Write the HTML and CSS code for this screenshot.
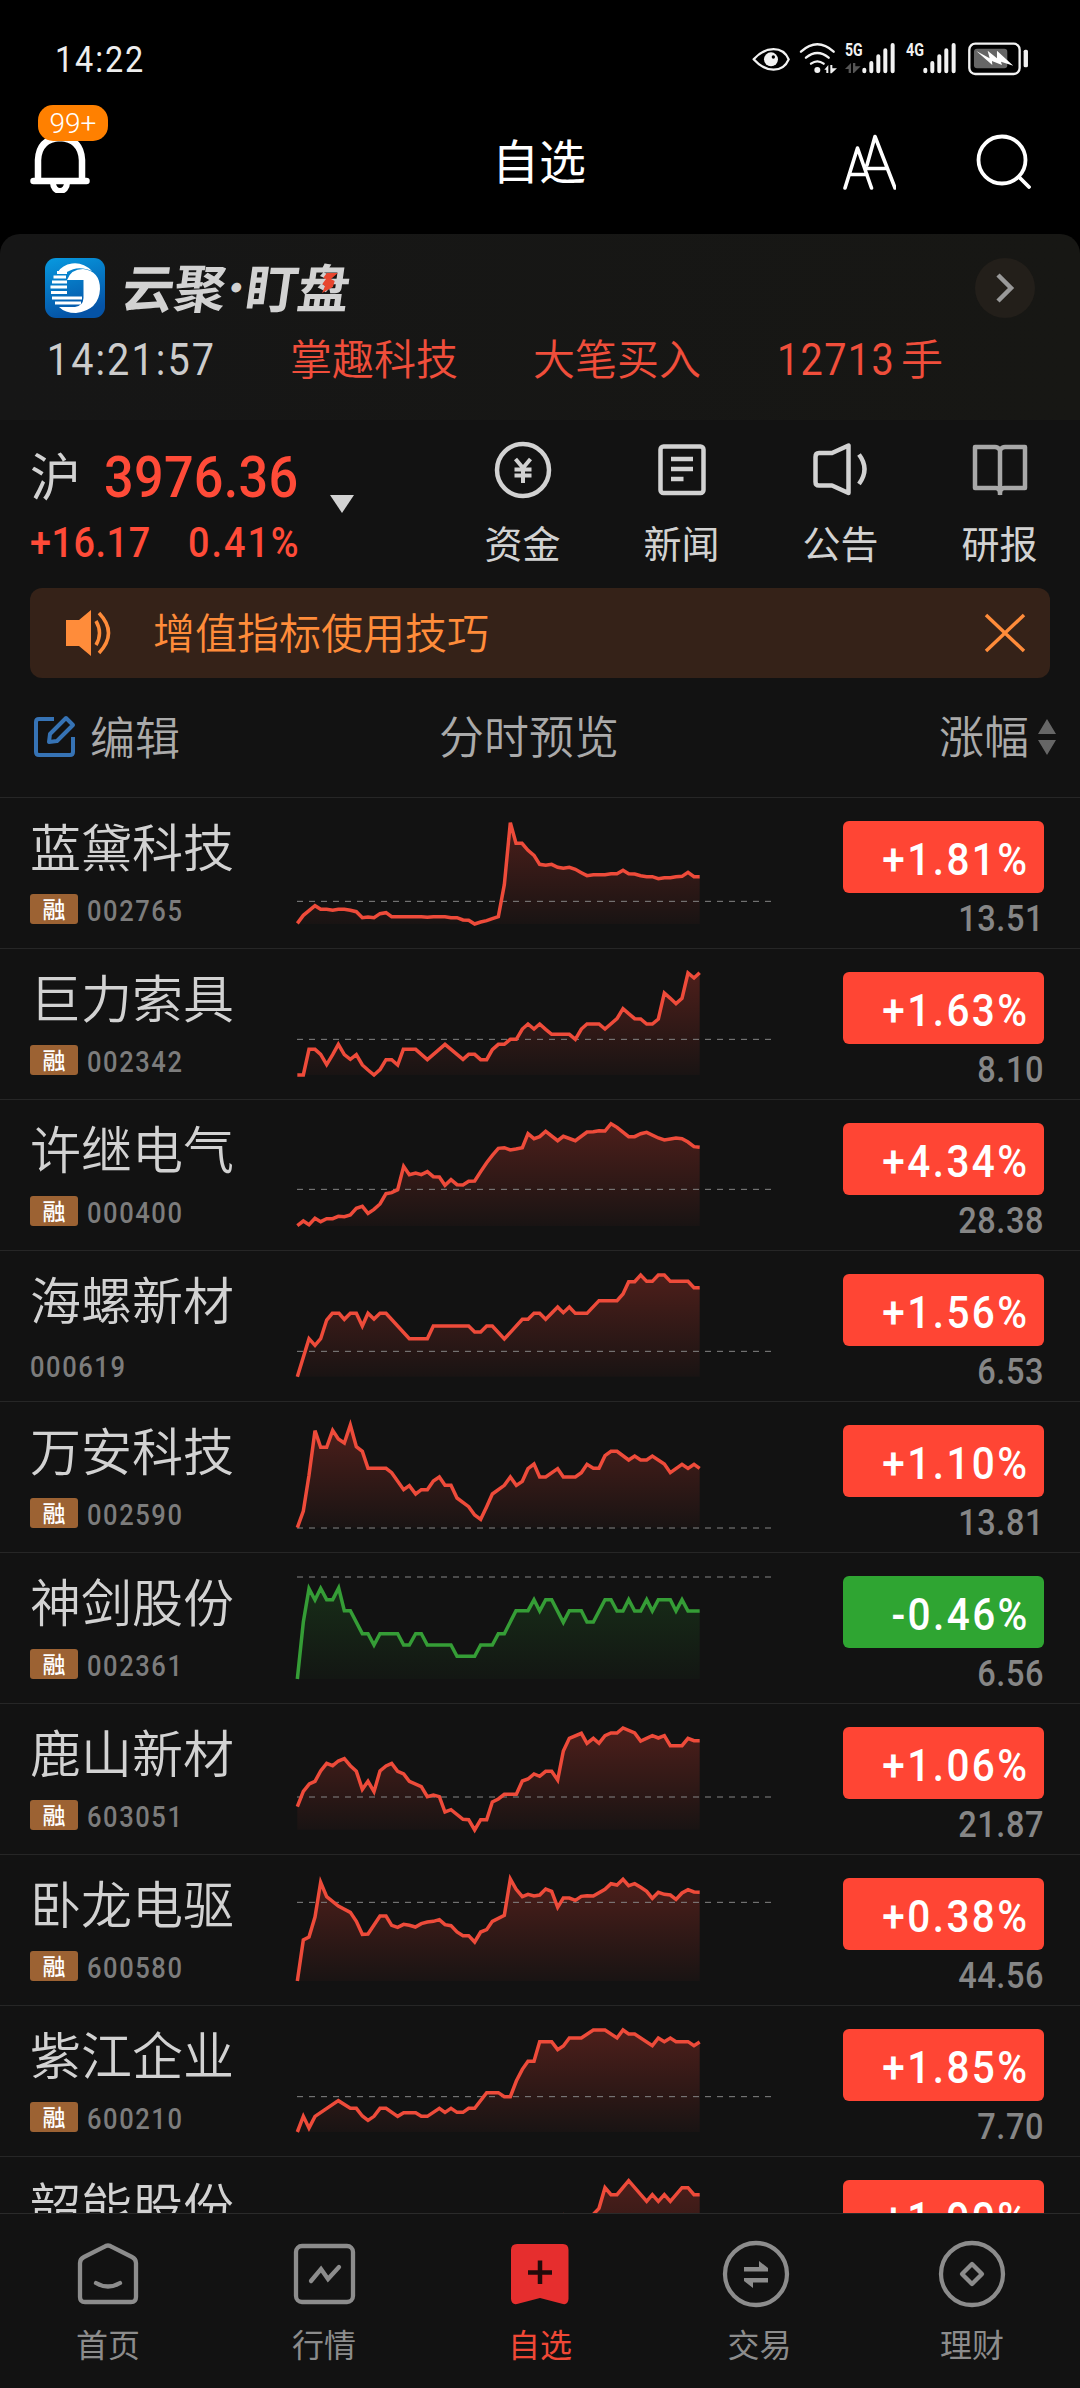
FILE: index.html
```html
<!DOCTYPE html>
<html lang="zh-CN">
<head>
<meta charset="utf-8">
<title>自选</title>
<link rel="stylesheet" href="styles.css">
</head>
<body>
<div class="app">
  <header class="status">
    <span class="clock num">14:22</span>
    <svg class="status-icons" viewBox="0 0 850 120">
      <g fill="none" stroke="#f2f2f2" stroke-width="7" stroke-linecap="round">
        <path d="M19 61C55 20 107 20 124 61C107 102 55 102 19 61Z" transform="translate(1 0)" stroke-linejoin="round"/>
        <path d="M162 38Q211 -6 260 38M177 56Q211 28 245 56M192 74Q211 60 230 74"/>
      </g>
      <circle cx="72" cy="61" r="21" fill="#f2f2f2"/><circle cx="79" cy="54" r="5" fill="#000"/>
      <circle cx="211" cy="93" r="9" fill="#f2f2f2"/>
      <path d="M232 92l12-14v24h-6v-10zM250 78h6v10h14l-16 15h-4z" fill="#f2f2f2"/>
      <path d="M294 90l18-18v30h-7v-12zM318 72h7v10h16l-20 20h-3z" fill="#555"/>
      <g class="net" fill="#f2f2f2"><text x="294" y="52" textLength="53" lengthAdjust="spacingAndGlyphs">5G</text><text x="477" y="52" textLength="54" lengthAdjust="spacingAndGlyphs">4G</text></g>
      <g stroke="#f2f2f2" stroke-width="12" stroke-linecap="round">
        <path d="M352 92v5M373 72v25M394 52v45M415 34v63M437 18v79M535 92v5M556 72v25M577 52v45M598 34v63M620 18v79"/>
      </g>
      <rect x="667" y="14" width="151" height="91" rx="18" fill="none" stroke="#f2f2f2" stroke-width="7"/>
      <rect x="681" y="29" width="100" height="59" rx="9" fill="#666"/>
      <path d="M688 36L728 58 722 35 750 58 750 35 799 80 762 68 765 78 735 66 736 78Z" fill="#fff"/>
      <rect x="830" y="32" width="13" height="53" rx="5" fill="#f2f2f2"/>
    </svg>
  </header>

  <div class="titlebar">
    <div class="bell">
      <svg viewBox="0 0 60 60" width="60" height="60"><path d="M8 48V27Q9 6 30 5Q51 6 52 27V48M3.500 48H56.500" fill="none" stroke="#fff" stroke-width="6.500" stroke-linecap="round"/><path d="M23 50a7 8 0 0 0 14 0" fill="none" stroke="#fff" stroke-width="6"/></svg>
      <span class="count">99+</span>
    </div>
    <h1>自选</h1>
    <svg class="font-size" viewBox="0 0 54 56" width="54" height="56"><g fill="none" stroke="#fff" stroke-width="3.600" stroke-linecap="round" stroke-linejoin="round"><path d="M3 54L15.500 14 29.500 54M8 40.500H25M25 31L33 2.500 53 54M24.500 34.500H45"/></g></svg>
    <svg class="search" viewBox="0 0 56 56" width="56" height="56"><g fill="none" stroke="#fff" stroke-width="3.800" stroke-linecap="round"><circle cx="27" cy="27" r="23.500"/><path d="M44 44L54 54"/></g></svg>
  </div>

  <section class="watch-card">
    <div class="brand">
      <svg class="logo" viewBox="0 0 60 60" width="60" height="60">
        <defs><linearGradient id="lg" x1="0" y1="0" x2="0.300" y2="1"><stop offset="0" stop-color="#079ae0"/><stop offset="1" stop-color="#0553a6"/></linearGradient></defs>
        <rect width="60" height="60" rx="11" fill="url(#lg)"/>
        <path d="M47 13Q38 4 27 5.500Q17 7 13 14H22Q30 9 38 10.500Q43 11 47 13Z" fill="#fff"/>
        <path d="M22 22Q26 11 38 11Q55 13 55 31Q54 52 31 55Q20 55 14 49H30Q38 48 38.500 40V22Z" fill="#fff"/>
        <path d="M12 14.500H22M8.500 19H21M7 24H22M5.500 29H22M6 34.500H22M7 40H37M10 45H36" stroke="#fff" stroke-width="2.800"/>
      </svg>
      <h2>云聚<i>·</i>盯<span class="pan">盘<svg viewBox="0 0 14 20" width="14" height="20"><path d="M3 0H14L8 6 12 8 11 14 1 20 3 13 0 11 3 6 0 5Z" fill="#e8462f"/></svg></span></h2>
      <span class="more"><svg viewBox="0 0 20 32" width="20" height="32"><path d="M3 3L16 16 3 29" fill="none" stroke="#999" stroke-width="4.500"/></svg></span>
    </div>
    <div class="tick">
      <span class="tick-time num">14:21:57</span>
      <span class="tick-name">掌趣科技</span>
      <span class="tick-kind">大笔买入</span>
      <span class="tick-vol"><b class="num">12713</b>手</span>
    </div>
  </section>

  <section class="market">
    <div class="index">
      <div class="index-top"><span class="index-name">沪</span><span class="index-value num">3976.36</span><i class="caret"></i></div>
      <div class="index-change"><span class="num chg">+16.17</span><span class="num pct-chg">0.41%</span></div>
    </div>
    <nav class="shortcuts">
      <a><svg viewBox="0 0 60 60"><circle cx="30" cy="30" r="26"/><path d="M22.500 19L30 28 37.500 19M30 28V43M21.500 29.500H38.500M21.500 35.500H38.500" stroke-width="4"/></svg>资金</a>
      <a><svg viewBox="0 0 60 60"><rect x="8.500" y="6.500" width="43" height="46.500" rx="3"/><path d="M19 19H41M19 29H41M19 39H31.500"/></svg>新闻</a>
      <a><svg viewBox="0 0 60 60"><path d="M8 13H21L37.500 5.500V53L21 45.500H8Q4.500 45.500 4.500 42V17Q4.500 13 8 13ZM48 14.500Q59 29 48 44" stroke-linejoin="round"/></svg>公告</a>
      <a class="dim"><svg viewBox="0 0 60 60"><path d="M30 10Q28 7 25 7H5V48H26Q30 48 30 53Q30 48 34 48H55V7H35Q32 7 30 10ZM30 10V55" stroke-linejoin="round"/></svg>研报</a>
    </nav>
  </section>

  <aside class="notice">
    <svg viewBox="0 0 48 48" width="48" height="48"><path d="M1 11H14L26 1V47L14 37H1Z" fill="#ff8c3a"/><path d="M31 12Q38 24 31 36M34 4Q53 24 34 44" fill="none" stroke="#ff8c3a" stroke-width="3.500"/></svg>
    <p>增值指标使用技巧</p>
    <svg class="close" viewBox="0 0 42 40" width="42" height="40"><path d="M2 2L40 38M40 2L2 38" stroke="#ff8c3a" stroke-width="3.500"/></svg>
  </aside>

  <div class="columns">
    <span class="edit"><svg viewBox="0 0 44 44" width="44" height="44"><g fill="none" stroke="#3673b5" stroke-width="4" stroke-linejoin="round"><path d="M21 5H6Q3 5 3 8V38Q3 41 6 41H37Q40 41 40 38V23"/><path d="M33 4L40 11 24 27 16 28 17 20Z"/></g></svg>编辑</span>
    <span class="preview">分时预览</span>
    <span class="sort">涨幅<svg viewBox="0 0 18 36" width="18" height="36"><path d="M9 0L18 15H0ZM9 36L18 21H0Z" fill="#666"/></svg></span>
  </div>

  <main class="list">
    <article class="row"><div class="stock"><h3>蓝黛科技</h3><p><em>融</em><span class="num">002765</span></p></div><svg class="chart" viewBox="0 0 1560 450"></svg><div class="quote"><strong><b class="num">+1.81%</b></strong><span class="num">13.51</span></div></article>
    <article class="row"><div class="stock"><h3>巨力索具</h3><p><em>融</em><span class="num">002342</span></p></div><svg class="chart" viewBox="0 0 1560 450"></svg><div class="quote"><strong><b class="num">+1.63%</b></strong><span class="num">8.10</span></div></article>
    <article class="row"><div class="stock"><h3>许继电气</h3><p><em>融</em><span class="num">000400</span></p></div><svg class="chart" viewBox="0 0 1560 450"></svg><div class="quote"><strong><b class="num">+4.34%</b></strong><span class="num">28.38</span></div></article>
    <article class="row"><div class="stock"><h3>海螺新材</h3><p class="plain"><span class="num">000619</span></p></div><svg class="chart" viewBox="0 0 1560 450"></svg><div class="quote"><strong><b class="num">+1.56%</b></strong><span class="num">6.53</span></div></article>
    <article class="row"><div class="stock"><h3>万安科技</h3><p><em>融</em><span class="num">002590</span></p></div><svg class="chart" viewBox="0 0 1560 450"></svg><div class="quote"><strong><b class="num">+1.10%</b></strong><span class="num">13.81</span></div></article>
    <article class="row down"><div class="stock"><h3>神剑股份</h3><p><em>融</em><span class="num">002361</span></p></div><svg class="chart" viewBox="0 0 1560 450"></svg><div class="quote"><strong><b class="num">-0.46%</b></strong><span class="num">6.56</span></div></article>
    <article class="row"><div class="stock"><h3>鹿山新材</h3><p><em>融</em><span class="num">603051</span></p></div><svg class="chart" viewBox="0 0 1560 450"></svg><div class="quote"><strong><b class="num">+1.06%</b></strong><span class="num">21.87</span></div></article>
    <article class="row"><div class="stock"><h3>卧龙电驱</h3><p><em>融</em><span class="num">600580</span></p></div><svg class="chart" viewBox="0 0 1560 450"></svg><div class="quote"><strong><b class="num">+0.38%</b></strong><span class="num">44.56</span></div></article>
    <article class="row"><div class="stock"><h3>紫江企业</h3><p><em>融</em><span class="num">600210</span></p></div><svg class="chart" viewBox="0 0 1560 450"></svg><div class="quote"><strong><b class="num">+1.85%</b></strong><span class="num">7.70</span></div></article>
    <article class="row"><div class="stock"><h3>韶能股份</h3></div><svg class="chart" viewBox="0 0 1560 450"></svg><div class="quote"><strong><b class="num">+1.90%</b></strong></div></article>
  </main>

  <nav class="tabs">
    <a><svg viewBox="0 0 68 68"><path d="M34 5.500Q36 5.500 38 7L58 17Q62 19 62 23V57Q62 62 57 62H11Q6 62 6 57V23Q6 19 10 17L30 7Q32 5.500 34 5.500Z"/><path d="M22 43Q34 50 46 43" stroke-linecap="round"/></svg>首页</a>
    <a><svg viewBox="0 0 68 68"><rect x="6" y="6" width="57" height="56" rx="6"/><path d="M21 41L31 29 38 39 49 27" stroke-linecap="round"/></svg>行情</a>
    <a class="active"><svg viewBox="0 0 68 68"><path d="M11 4H57Q62.500 4 62.500 10V59Q62 65 57 64L34 58 11 64Q5.500 65 5 59V10Q5 4 11 4Z" class="flag"/><path d="M34 20.500V44M22 32.500H46" class="plus"/></svg>自选</a>
    <a class="trade"><svg viewBox="0 0 68 68"><circle cx="34" cy="34" r="31"/><path class="arrows" d="M22 27H37V21L46 28V31.500H22ZM46 42.500H31V48L22 41V38H46Z"/></svg><span>交易</span></a>
    <a><svg viewBox="0 0 68 68"><circle cx="34" cy="34" r="31"/><path d="M34 24L44 34 34 44 24 34Z" stroke-linejoin="round"/></svg>理财</a>
  </nav>
</div>
<script src="charts.js"></script>
</body>
</html>
```
FILE: styles.css
```css
* { box-sizing: border-box; margin: 0; padding: 0; }
body { background: #000; font-family: "Noto Sans CJK SC", sans-serif; color: #d2d2d2; }
h1, h2, h3 { font-weight: 400; }
i, em { font-style: normal; }
svg { display: block; flex: none; }
/* Narrow figures: Roboto squeezed horizontally, anchored on the left unless right-aligned. */
.num { font-family: Roboto, "Liberation Sans", sans-serif; display: inline-block; transform: scaleX(0.9); transform-origin: 0 50%; }
.app { width: 1080px; height: 2388px; overflow: hidden; display: flex; flex-direction: column; background: #000; }

.status { height: 100px; padding: 18px 50px 0 55px; display: flex; justify-content: space-between; align-items: center; flex: none; }
.clock { font-size: 36px; color: #eee; letter-spacing: 2.1px; padding-top: 2px; }
.status-icons { width: 283.3px; height: 40px; }
.net text { font: 700 53px Roboto, sans-serif; }

.titlebar { height: 134px; flex: none; display: flex; align-items: flex-start; position: relative; padding: 0 49px 0 30px; }
.bell { position: relative; padding-top: 33px; width: 463px; }
.count { position: absolute; left: 8px; top: 5px; width: 70px; height: 36px; border-radius: 15px; background: #ff8000; color: #fff; font: 300 28px/38px Roboto, sans-serif; text-align: center; }
h1 { font-size: 47px; line-height: 60px; color: #fff; margin: 29px 0 0 -1px; width: 97px; white-space: nowrap; }
.font-size { margin: 34px 0 0 253px; }
.search { margin: 33px 0 0 auto; }

.watch-card { height: 186px; flex: none; background: linear-gradient(90deg, #161616, #171714); border-radius: 20px 20px 0 0; padding: 24px 45px 0; }
.brand { height: 60px; display: flex; align-items: center; }
h2 { font-size: 52px; font-weight: 700; line-height: 60px; letter-spacing: -0.2px; margin: -4px 0 0 18px; transform: skewX(-8deg); display: flex; }
h2 i { width: 20px; font-size: 38px; text-indent: -9px; }
.pan { position: relative; }
.pan svg { position: absolute; left: 24px; top: 17px; }
.more { margin-left: auto; width: 60px; height: 60px; border-radius: 50%; background: #231f1a; display: flex; align-items: center; justify-content: center; }
.tick { height: 60px; margin-top: 8px; display: flex; align-items: center; font-size: 42px; color: #f04e3b; font-weight: 350; white-space: nowrap; }
.tick-time { width: 245px; padding: 7px 0 0 2px; color: #ccc; font-size: 44px; font-weight: 400; letter-spacing: 2.3px; }
.tick-name { width: 243px; }
.tick-kind { width: 244px; }
.tick-vol b { font-size: 44px; font-weight: 400; width: 124px; letter-spacing: 1.5px; }

.market { height: 168px; flex: none; background: #121212; padding: 0 0 0 30px; display: flex; }
.index { width: 413px; color: #ff4b38; }
.index-top { display: flex; height: 62px; margin-top: 24px; align-items: center; }
.index-name { font-size: 51px; line-height: 62px; width: 74px; color: #d2d2d2; margin-top: -3px; }
.index-value { font-size: 58px; font-weight: 500; width: 226px; line-height: 62px; padding-top: 3px; letter-spacing: 0.3px; }
.caret { border: 12px solid transparent; border-top: 18px solid #d2d2d2; border-bottom: 0; margin-top: 51px; align-self: flex-start; }
.index-change { display: flex; height: 50px; font-size: 42px; font-weight: 500; line-height: 50px; padding-top: 12px; }
.chg { width: 158px; letter-spacing: 0.6px; }
.pct-chg { letter-spacing: 2.2px; }
.shortcuts { display: grid; grid-template-columns: repeat(4, 159px); }
.shortcuts a { display: flex; flex-direction: column; align-items: center; font-size: 38px; line-height: 50px; padding-top: 20px; gap: 17px; }
.shortcuts svg { width: 60px; height: 60px; fill: none; stroke: #d2d2d2; stroke-width: 4.500px; }
.shortcuts .dim svg { stroke: #a8a8a8; }

.notice { flex: none; display: flex; align-items: center; height: 90px; padding: 0 24px 0 35px; border-radius: 12px; background: #352218; color: #ff8c3a; font-size: 42px; box-shadow: 0 0 0 200px #121212; margin: 0 30px; position: relative; clip-path: inset(0 -30px); }
.notice p { margin: -5px 0 0 40px; font-weight: 350; }
.close { margin-left: auto; }

.columns { height: 119px; flex: none; background: #121212; position: relative; display: flex; align-items: center; color: #aaa; font-size: 45px; font-weight: 350; padding: 0 24px 6px 33px; }
.edit { display: flex; align-items: center; gap: 13px; width: 406px; margin-top: 2px; }
.sort { margin-left: auto; display: flex; align-items: center; gap: 9px; }
.sort svg { margin-top: 5px; }

.list { background: #121212; height: 1416px; flex: none; overflow: hidden; }
.row { display: grid; grid-template-columns: 280px 520px 1fr; height: 151px; border-top: 1px solid #262626; }
.chart { width: 520px; height: 150px; }
.stock { padding: 15px 0 0 30px; }
h3 { font-size: 51px; line-height: 64px; font-weight: 350; white-space: nowrap; }
.stock p { display: flex; align-items: center; height: 30px; margin-top: 17px; }
.stock em { width: 48px; height: 30px; border-radius: 3px; background: #9c6233; color: #fff; font-size: 23px; font-weight: 500; line-height: 29px; text-align: center; margin-right: 9px; }
.stock p span { font-size: 29px; font-weight: 500; color: #7c7c7c; letter-spacing: 1.8px; transform: scaleX(0.88); padding-top: 4px; }
.stock .plain { margin-top: 20px; }
.quote { padding: 23px 36px 0 43px; display: flex; flex-direction: column; text-align: right; }
.quote .num { transform-origin: 100% 50%; }
.quote strong { height: 72px; border-radius: 6px; background: #ff4534; color: #fff; font-size: 45px; font-weight: 500; line-height: 70px; padding-right: 14px; }
.quote b { font-weight: 500; letter-spacing: 2.7px; }
.down .quote strong { background: #2fa532; }
.quote span { font-size: 37px; font-weight: 500; line-height: 44px; margin-top: 4px; color: #868686; transform: scaleX(0.88); letter-spacing: 0.6px; }
.chart .line { fill: none; stroke: #ee4b3a; stroke-width: 10.500px; }
.down .chart .line { stroke: #359d36; }
.chart .base { stroke: #858585; stroke-width: 3px; stroke-dasharray: 18 18; }

.tabs { flex: 1; background: #121212; border-top: 1px solid #2a2a2a; display: grid; grid-template-columns: repeat(5, 216px); }
.tabs a { display: flex; flex-direction: column; align-items: center; padding-top: 26px; font-size: 32px; line-height: 44px; gap: 13px; color: #8c8c8c; }
.tabs svg { width: 68px; height: 68px; fill: none; stroke: #8c8c8c; stroke-width: 4.300px; }
.tabs .active { color: #f04836; }
.tabs .flag { fill: #e62e2e; stroke: none; }
.tabs .plus { stroke: #220b0b; stroke-width: 4.500px; }
.tabs .arrows { fill: #8c8c8c; stroke: none; }
.trade span { padding-left: 7px; }
```
FILE: charts.js
```js
// Intraday lines, in thirds of a pixel; top is the row's own origin.
const charts = [
  { top: 24, base: 402, prev: 334, line: "52,400 70,376 88,361 105,347 122,358 140,358 158,361 175,358 193,358 211,361 229,365 247,383 264,381 282,383 300,371 318,368 335,380 424,380 442,382 460,380 495,380 513,383 531,383 549,390 566,391 584,402 602,396 620,392 637,386 655,380 673,284 691,98 708,160 726,160 744,181 762,196 779,223 797,226 815,223 833,232 850,235 868,232 886,238 904,248 921,257 940,254 975,254 993,251 1011,251 1029,241 1046,251 1064,252 1082,257 1100,260 1117,260 1135,266 1153,263 1171,263 1188,260 1206,259 1224,247 1242,260 1259,260" },
  { top: 477, base: 855, prev: 748, line: "52,855 70,855 87,778 105,778 122,793 140,824 158,794 175,763 193,794 211,808 229,794 247,825 264,840 282,855 300,839 318,809 335,809 353,825 370,778 407,778 442,809 495,763 549,808 566,793 584,793 602,809 620,809 637,779 655,763 673,763 691,748 709,748 727,717 744,702 762,717 779,702 797,718 815,733 868,733 886,748 904,717 921,702 957,702 975,717 1011,686 1029,656 1046,671 1064,686 1082,687 1100,702 1117,702 1135,687 1153,609 1171,625 1188,641 1206,625 1224,549 1242,564 1259,548" },
  { top: 930, base: 1308, prev: 1198, line: "52,1307 70,1293 87,1304 105,1285 122,1295 140,1286 158,1286 175,1279 193,1280 211,1275 229,1255 247,1249 264,1270 282,1258 300,1242 318,1211 335,1208 353,1199 371,1129 388,1154 407,1149 424,1154 442,1145 460,1160 478,1161 495,1186 513,1169 531,1184 549,1185 566,1174 584,1173 602,1145 620,1118 637,1096 655,1075 673,1073 691,1080 708,1077 727,1073 744,1031 762,1046 779,1040 797,1024 833,1052 850,1039 886,1052 921,1026 940,1025 957,1022 975,1023 993,1001 1011,1012 1046,1040 1064,1040 1082,1031 1100,1027 1135,1044 1153,1050 1171,1047 1188,1044 1206,1046 1224,1056 1242,1070 1259,1072" },
  { top: 3, base: 380, prev: 304, line: "52,380 87,266 105,286 122,266 140,210 157,190 177,190 193,208 211,190 229,190 247,228 264,190 282,207 300,190 318,190 388,266 442,266 460,228 566,228 584,246 602,246 620,228 637,228 673,267 727,208 744,208 762,190 779,190 797,208 833,171 850,188 868,171 886,190 921,190 957,152 1011,152 1029,132 1046,95 1064,95 1082,75 1100,94 1117,94 1135,75 1153,75 1171,94 1224,94 1242,113 1259,113" },
  { top: 456, base: 833, prev: 834, line: "52,833 70,783 87,676 105,542 122,592 140,592 158,541 175,567 193,579 211,525 229,590 247,604 264,655 318,655 335,668 371,719 388,707 407,732 424,719 442,719 460,693 478,681 495,706 513,706 531,744 566,770 584,795 602,808 620,770 637,732 673,706 691,681 709,706 727,694 744,656 762,642 779,681 797,681 833,656 850,681 886,681 904,668 921,643 940,655 957,655 975,617 993,604 1011,604 1046,630 1064,618 1082,630 1100,630 1117,618 1153,642 1171,668 1206,643 1224,655 1242,643 1259,655" },
  { top: 909, base: 1287, prev: 981, down: true, line: "52,1287 70,1116 87,1016 105,1050 122,1015 140,1049 158,1049 176,1014 193,1082 211,1082 247,1151 264,1151 282,1185 300,1151 353,1151 371,1185 388,1185 407,1151 424,1151 442,1185 513,1185 531,1219 584,1219 602,1185 637,1185 655,1151 673,1151 708,1082 744,1082 762,1049 779,1083 797,1049 815,1049 850,1117 868,1082 904,1082 921,1116 940,1116 975,1049 993,1049 1011,1083 1029,1083 1046,1049 1064,1083 1082,1083 1100,1049 1117,1083 1135,1049 1171,1049 1188,1083 1206,1049 1224,1083 1259,1083" },
  { top: 12, base: 389, prev: 291, line: "52,320 70,274 88,252 105,244 122,213 140,190 158,197 175,183 193,176 211,197 229,214 247,268 264,244 282,275 300,213 318,198 335,190 353,214 371,222 388,244 424,260 442,290 460,285 478,290 495,336 513,329 549,358 566,359 584,390 602,359 620,359 637,306 655,297 673,283 709,283 727,243 744,237 762,222 779,229 797,214 815,214 833,240 850,153 868,115 904,100 921,130 940,115 957,130 975,107 993,99 1011,99 1029,84 1064,99 1082,123 1117,107 1135,114 1153,107 1171,137 1206,137 1224,115 1242,122 1259,122" },
  { top: 465, base: 843, prev: 607, line: "52,843 70,720 87,711 105,651 122,547 140,590 175,618 211,637 229,664 247,703 264,702 300,648 318,648 335,676 353,682 371,673 388,676 406,681 424,671 442,666 460,664 478,659 495,674 513,677 531,696 549,707 566,707 584,726 602,696 620,689 637,664 673,646 691,537 708,567 727,590 744,583 762,588 779,585 797,567 815,574 833,622 850,594 868,594 886,601 904,589 921,587 940,588 975,568 993,551 1011,555 1029,538 1046,557 1064,551 1082,562 1100,574 1117,595 1135,577 1153,583 1171,585 1188,598 1206,579 1224,569 1242,576 1259,577" },
  { top: 918, base: 1296, prev: 1190, line: "52,1296 70,1249 87,1284 105,1249 175,1202 211,1225 229,1225 247,1248 264,1261 282,1249 300,1225 318,1225 353,1249 371,1238 407,1238 424,1249 442,1249 478,1225 495,1237 513,1225 531,1237 549,1237 566,1225 584,1225 620,1178 655,1178 673,1190 691,1190 709,1143 727,1108 744,1084 762,1084 779,1025 815,1025 833,1049 850,1038 868,1014 904,1014 940,990 975,990 1011,1014 1029,990 1046,1002 1064,1002 1117,1037 1135,1014 1153,1025 1171,1014 1188,1025 1224,1025 1242,1037 1259,1026" },
  { top: 1371, base: 1749, prev: 1680, line: "780,1620 833,1582 850,1549 868,1582 904,1582 921,1564 940,1543 957,1525 975,1463 993,1484 1011,1484 1046,1442 1100,1504 1117,1484 1135,1504 1153,1484 1171,1504 1206,1463 1224,1463 1242,1484 1259,1484" }
];

document.querySelectorAll(".chart").forEach((svg, i) => {
  const c = charts[i];
  const startX = c.line.split(",")[0];
  const color = c.down ? "#2fa532" : "#ff4534";
  svg.setAttribute("viewBox", `0 ${c.top} 1560 450`);
  svg.innerHTML = `
    <defs><linearGradient id="fill${i}" gradientUnits="userSpaceOnUse" x1="0" y1="${c.base - 306}" x2="0" y2="${c.base}">
      <stop offset="0" stop-color="${color}" stop-opacity="${c.down ? 0.2 : 0.25}"/><stop offset="1" stop-color="${color}" stop-opacity="0.03"/>
    </linearGradient></defs>
    <polygon fill="url(#fill${i})" points="${startX},${c.base} ${c.line} 1259,${c.base}"/>
    <path class="base" d="M51 ${c.prev}H1475"/>
    <polyline class="line" points="${c.line}"/>`;
});
```
